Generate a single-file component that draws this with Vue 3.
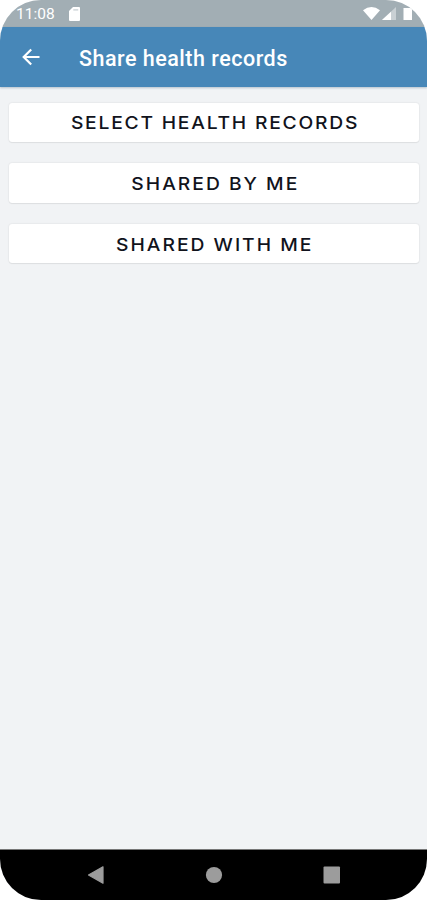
<script setup>
import { ref } from 'vue'

const title = ref('Share health records')
const time = ref('11:08')

const actions = [
  { id: 'select', label: 'SELECT HEALTH RECORDS' },
  { id: 'by-me', label: 'SHARED BY ME' },
  { id: 'with-me', label: 'SHARED WITH ME' }
]
</script>

<template>
  <div class="phone">
    <!-- Status bar -->
    <div class="status-bar">
      <span class="time">{{ time }}</span>
      <svg class="sd-card" width="11" height="14" viewBox="0 0 11 14">
        <path d="M4 0h6a1 1 0 0 1 1 1v12a1 1 0 0 1-1 1H1a1 1 0 0 1-1-1V4z" fill="#fff" />
        <path d="M4.3 2.8h4.9" stroke="#a2aeb4" stroke-width="1.3" stroke-opacity=".6" />
      </svg>
      <svg class="signals" width="50" height="14" viewBox="0 0 50 14">
        <path d="M0 3.2Q8.5-3 17 3.2L8.5 13z" fill="#fff" />
        <path d="M33 0v13H19z" fill="#c9d0d4" />
        <path d="M28 4.7V13h-9z" fill="#fff" />
        <path d="M40.5 1H49v12h-8.5z" fill="#fff" />
      </svg>
    </div>

    <!-- App bar -->
    <header class="app-bar">
      <button class="back" aria-label="Back">
        <svg width="18" height="18" viewBox="0 0 18 18">
          <path d="M9.2 1.5L1.7 9l7.5 7.5M1.7 9H17.5" fill="none" stroke="#fff" stroke-width="2.2" />
        </svg>
      </button>
      <h1>{{ title }}</h1>
    </header>

    <!-- Actions -->
    <main class="content">
      <button v-for="action in actions" :key="action.id" class="action" :class="action.id">
        <span class="label">{{ action.label }}</span>
      </button>
    </main>

    <!-- System navigation -->
    <nav class="nav-bar">
      <svg width="18" height="20" viewBox="0 0 18 20">
        <path d="M1.5 10L16 1.8v16.4z" fill="#9c9c9c" stroke="#9c9c9c" stroke-width="1.2" stroke-linejoin="round" />
      </svg>
      <svg width="18" height="18" viewBox="0 0 18 18">
        <circle cx="9" cy="9" r="8.1" fill="#9c9c9c" />
      </svg>
      <svg width="18" height="18" viewBox="0 0 18 18">
        <rect x="0.5" y="0.5" width="16.5" height="17" rx="1" fill="#9c9c9c" />
      </svg>
    </nav>
  </div>
</template>

<style>
body {
  margin: 0;
  background: #fff;
}
</style>

<style scoped>
.phone {
  width: 427px;
  height: 900px;
  display: flex;
  flex-direction: column;
  box-sizing: border-box;
  overflow: hidden;
  border-radius: 41px;
  background: #f1f3f5;
  font-family: Roboto, "Liberation Sans", sans-serif;
}

button {
  margin: 0;
  padding: 0;
  border: 0;
  background: none;
}

.status-bar {
  height: 26.5px;
  flex: none;
  display: flex;
  align-items: center;
  box-sizing: border-box;
  padding: 2px 14px 0 16px;
  background: #a2aeb4;
  color: #fff;
}

.time {
  width: 53px;
  font-size: 15.5px;
  line-height: 18px;
}

.signals {
  margin-left: auto;
}

.app-bar {
  height: 60px;
  flex: none;
  display: flex;
  align-items: center;
  box-sizing: border-box;
  padding: 1px 0 0 22px;
  background: #4787b8;
  box-shadow: 0 1px 2px rgba(40, 80, 110, .3);
}

.back {
  width: 57px;
  height: 18px;
  display: flex;
}

h1 {
  margin: 0;
  padding-top: 3px;
  color: #fff;
  font-size: 21.5px;
  font-weight: 500;
  line-height: 26px;
  letter-spacing: .5px;
  white-space: nowrap;
}

.content {
  flex: 1;
  display: flex;
  flex-direction: column;
  gap: 21px;
  padding: 16px 8px 0 9px;
}

.action {
  height: 39.5px;
  display: flex;
  align-items: center;
  justify-content: center;
  border-radius: 3px;
  background: #fff;
  color: #11131c;
  box-shadow: 0 0 2px rgba(0, 0, 0, .12), 0 1px 1px rgba(0, 0, 0, .05);
}

/* Wide geometric caps */
.label {
  margin-right: -2px;
  padding-top: 1px;
  font-family: Inter, "Liberation Sans", sans-serif;
  font-size: 17.5px;
  font-weight: 500;
  letter-spacing: 1.62px;
  white-space: nowrap;
  transform: scaleX(1.1);
}

.by-me .label,
.with-me .label {
  letter-spacing: 1.82px;
}

.with-me .label {
  padding-top: 2px;
}

.nav-bar {
  height: 51.5px;
  flex: none;
  display: flex;
  align-items: center;
  justify-content: space-between;
  box-sizing: border-box;
  padding: 0 86px 0 87px;
  border-top: 1px solid #777;
  background: #000;
}
</style>
